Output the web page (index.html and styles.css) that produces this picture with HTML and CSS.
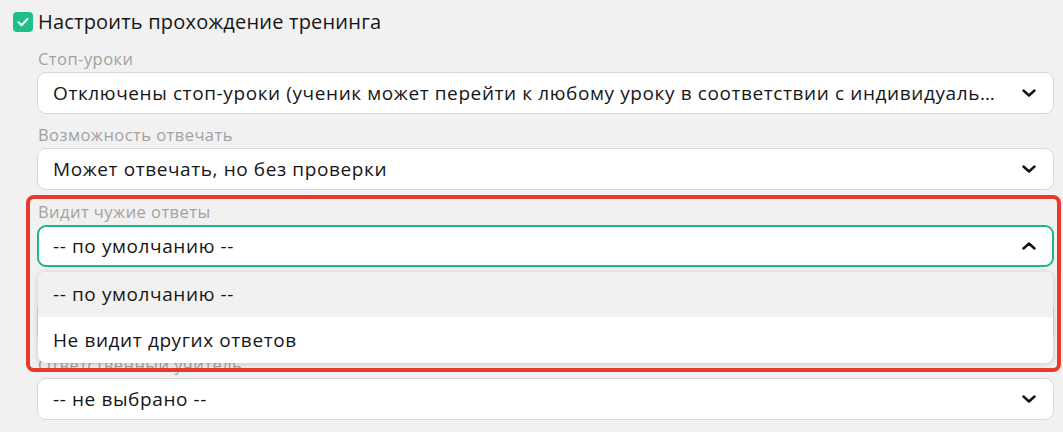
FILE: index.html
```html
<!DOCTYPE html>
<html lang="ru">
<head>
<meta charset="utf-8">
<title>Настроить прохождение тренинга</title>
<link rel="stylesheet" href="styles.css">
</head>
<body>
<div class="page">
  <label class="check-row">
    <span class="checkbox">
      <svg viewBox="0 0 20 20" width="20" height="20"><path d="M5.5 10.3l3 3 6-6.3" fill="none" stroke="#fff" stroke-width="2" stroke-linecap="round" stroke-linejoin="round"/></svg>
    </span>
    <span class="check-title">Настроить прохождение тренинга</span>
  </label>

  <div class="fields">
    <div class="field">
      <div class="field-label">Стоп-уроки</div>
      <div class="select">
        <span class="select-value">Отключены стоп-уроки (ученик может перейти к любому уроку в соответствии с индивидуальным графиком прохождения)</span>
        <svg class="chev" viewBox="0 0 14 8" width="14" height="8"><path d="M1.5 1.5l5.5 5 5.5-5" fill="none" stroke="#111" stroke-width="2.4" stroke-linecap="round" stroke-linejoin="round"/></svg>
      </div>
    </div>

    <div class="field">
      <div class="field-label">Возможность отвечать</div>
      <div class="select">
        <span class="select-value">Может отвечать, но без проверки</span>
        <svg class="chev" viewBox="0 0 14 8" width="14" height="8"><path d="M1.5 1.5l5.5 5 5.5-5" fill="none" stroke="#111" stroke-width="2.4" stroke-linecap="round" stroke-linejoin="round"/></svg>
      </div>
    </div>

    <div class="field field-open">
      <div class="field-label">Видит чужие ответы</div>
      <div class="select select-focused">
        <span class="select-value">-- по умолчанию --</span>
        <svg class="chev" viewBox="0 0 14 8" width="14" height="8"><path d="M1.5 6.5l5.5-5 5.5 5" fill="none" stroke="#111" stroke-width="2.4" stroke-linecap="round" stroke-linejoin="round"/></svg>
      </div>
      <ul class="dropdown">
        <li class="option option-active">-- по умолчанию --</li>
        <li class="option">Не видит других ответов</li>
      </ul>
    </div>

    <div class="field field-covered">
      <div class="field-label"></div>
      <div class="select">
        <span class="select-value"></span>
      </div>
    </div>

    <div class="field">
      <div class="field-label">Ответственный учитель</div>
      <div class="select">
        <span class="select-value">-- не выбрано --</span>
        <svg class="chev" viewBox="0 0 14 8" width="14" height="8"><path d="M1.5 1.5l5.5 5 5.5-5" fill="none" stroke="#111" stroke-width="2.4" stroke-linecap="round" stroke-linejoin="round"/></svg>
      </div>
    </div>
  </div>

  <div class="highlight"></div>
</div>
</body>
</html>
```

FILE: styles.css
```css
html, body {
  margin: 0;
  padding: 0;
  background: #f1f1f1;
}

body {
  font-family: "Open Sans", "Noto Sans", sans-serif;
  color: #161616;
  overflow: hidden;
}

.page {
  position: relative;
  padding: 12px 9px 0 13px;
}

.check-row {
  display: flex;
  align-items: center;
  gap: 5px;
  height: 20px;
}

.checkbox {
  width: 20px;
  height: 20px;
  border-radius: 4px;
  background: #1fbf88;
  display: flex;
  flex: none;
}

.check-title {
  font-size: 20px;
  line-height: 20px;
  letter-spacing: 0.2px;
}

.fields {
  margin-left: 24px;
  margin-top: 5px;
  display: flex;
  flex-direction: column;
}

.field {
  position: relative;
  margin-top: 11.5px;
}

.field-label {
  height: 20px;
  font-size: 16.5px;
  line-height: 20px;
  letter-spacing: 0.45px;
  color: #a2a2a2;
  margin-bottom: 3px;
  margin-left: 1px;
}

.select {
  box-sizing: border-box;
  height: 42px;
  background: #fff;
  border: 1px solid #d8d8d8;
  border-radius: 9px;
  display: flex;
  align-items: center;
  padding: 0 17px 0 15px;
  gap: 20px;
}

.select-focused {
  border: 2px solid #1db584;
  padding: 0 16px 0 14px;
}

.select-value {
  flex: 1;
  min-width: 0;
  font-size: 19px;
  letter-spacing: 0.6px;
  white-space: nowrap;
  overflow: hidden;
  text-overflow: ellipsis;
}

.chev {
  flex: none;
}

.dropdown {
  position: absolute;
  left: 1px;
  right: 1px;
  top: calc(100% + 5px);
  margin: 0;
  padding: 0;
  list-style: none;
  background: #fff;
  border-radius: 8px;
  overflow: hidden;
  box-shadow: 0 1px 6px rgba(0, 0, 0, 0.18);
  z-index: 2;
}

.option {
  height: 45.5px;
  display: flex;
  align-items: center;
  padding: 0 15px;
  font-size: 19px;
  letter-spacing: 0.6px;
}

.option-active {
  background: #f1f1f1;
}

.highlight {
  position: absolute;
  left: 26px;
  top: 195px;
  width: 1035px;
  height: 177px;
  box-sizing: border-box;
  border: 4px solid #e53a2f;
  border-radius: 8px;
  z-index: 3;
  pointer-events: none;
}
```
